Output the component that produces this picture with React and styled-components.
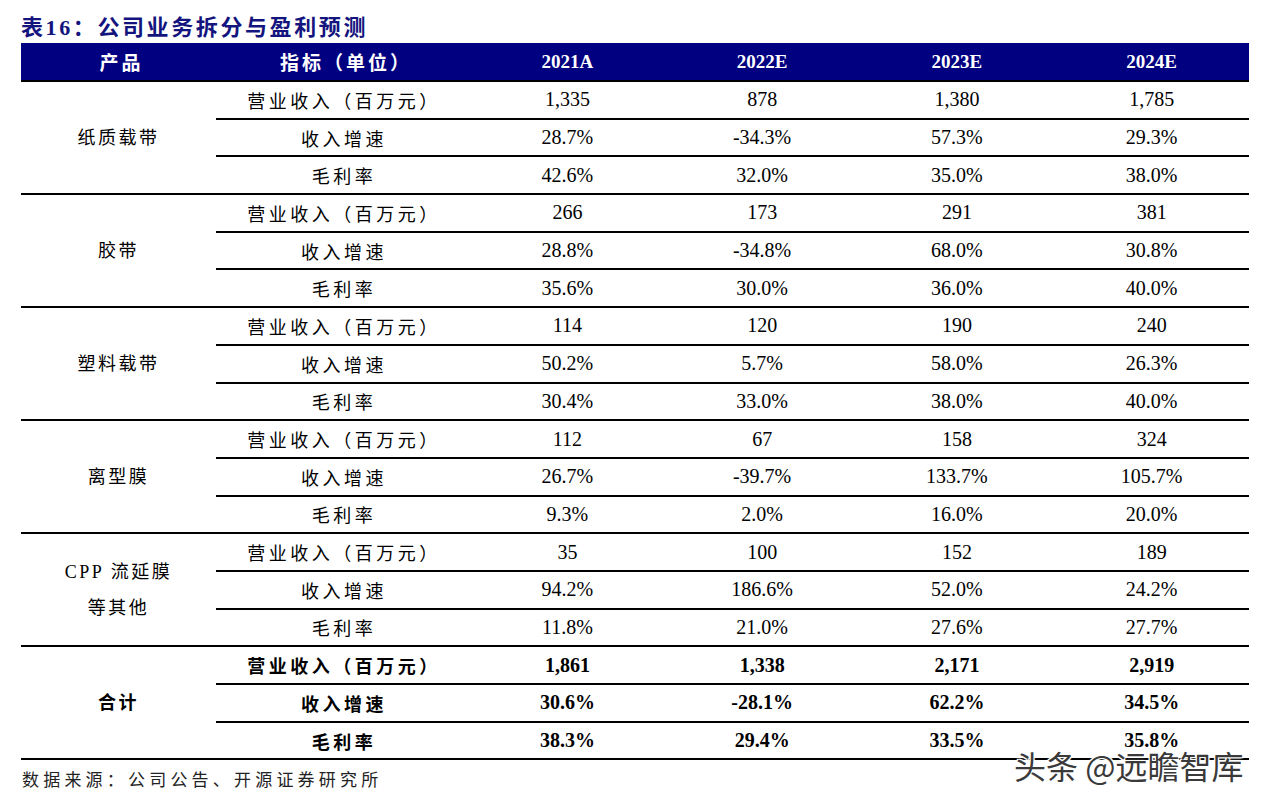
import React from 'react'
import styled, { createGlobalStyle } from 'styled-components'

const GlobalStyle = createGlobalStyle`
  html, body { margin: 0; padding: 0; background: #fff; }
  body { font-family: "Liberation Serif", "Noto Sans CJK SC", serif; color: #000; }
`

const groups = [
  {
    name: ['纸质载带'],
    rows: [
      ['营业收入（百万元）', '1,335', '878', '1,380', '1,785'],
      ['收入增速', '28.7%', '-34.3%', '57.3%', '29.3%'],
      ['毛利率', '42.6%', '32.0%', '35.0%', '38.0%'],
    ],
  },
  {
    name: ['胶带'],
    rows: [
      ['营业收入（百万元）', '266', '173', '291', '381'],
      ['收入增速', '28.8%', '-34.8%', '68.0%', '30.8%'],
      ['毛利率', '35.6%', '30.0%', '36.0%', '40.0%'],
    ],
  },
  {
    name: ['塑料载带'],
    rows: [
      ['营业收入（百万元）', '114', '120', '190', '240'],
      ['收入增速', '50.2%', '5.7%', '58.0%', '26.3%'],
      ['毛利率', '30.4%', '33.0%', '38.0%', '40.0%'],
    ],
  },
  {
    name: ['离型膜'],
    rows: [
      ['营业收入（百万元）', '112', '67', '158', '324'],
      ['收入增速', '26.7%', '-39.7%', '133.7%', '105.7%'],
      ['毛利率', '9.3%', '2.0%', '16.0%', '20.0%'],
    ],
  },
  {
    name: ['CPP 流延膜', '等其他'],
    rows: [
      ['营业收入（百万元）', '35', '100', '152', '189'],
      ['收入增速', '94.2%', '186.6%', '52.0%', '24.2%'],
      ['毛利率', '11.8%', '21.0%', '27.6%', '27.7%'],
    ],
  },
  {
    name: ['合计'],
    bold: true,
    rows: [
      ['营业收入（百万元）', '1,861', '1,338', '2,171', '2,919'],
      ['收入增速', '30.6%', '-28.1%', '62.2%', '34.5%'],
      ['毛利率', '38.3%', '29.4%', '33.5%', '35.8%'],
    ],
  },
]

const Page = styled.div`
  position: relative;
  width: 1273px;
  height: 797px;
  overflow: hidden;
`

const Title = styled.div`
  padding: 9px 0 0 21px;
  height: 34px;
  font-size: 22px;
  font-weight: bold;
  color: #14147e;
  letter-spacing: 2.6px;
  font-family: "Liberation Serif", "Noto Sans CJK SC", serif;
`

const Table = styled.div`
  width: 1228px;
  margin-left: 21px;
`

const HeaderRow = styled.div`
  display: grid;
  grid-template-columns: 195px 254px repeat(4, 1fr);
  height: 37px;
  background: #000080;
  border-bottom: 2px solid #000;
  color: #fff;
  font-weight: bold;
  font-size: 19px;
`

const HeadCell = styled.div`
  display: flex;
  align-items: center;
  justify-content: center;
  letter-spacing: ${p => (p.$cjk ? '3px' : '0')};
  padding-left: ${p => (p.$cjk ? '6px' : '0')};
`

const Group = styled.div`
  display: grid;
  grid-template-columns: 195px 1fr;
  border-bottom: 2px solid #000;
  font-weight: ${p => (p.$bold ? 'bold' : 'normal')};
`

const Product = styled.div`
  display: flex;
  flex-direction: column;
  align-items: center;
  justify-content: center;
  font-size: 18px;
  line-height: 36px;
  letter-spacing: 2.5px;
`

const Rows = styled.div`
  display: flex;
  flex-direction: column;
`

const Row = styled.div`
  display: grid;
  grid-template-columns: 254px repeat(4, 1fr);
  height: 35.7px;
  &:not(:last-child) {
    border-bottom: 2px solid #000;
  }
`

const Label = styled.div`
  display: flex;
  align-items: center;
  justify-content: center;
  padding-left: 2px;
  font-size: 18px;
  letter-spacing: 3.5px;
`

const Value = styled.div`
  display: flex;
  align-items: center;
  justify-content: center;
  font-size: 20px;
`

const Source = styled.div`
  padding: 6px 0 0 22px;
  font-size: 17px;
  letter-spacing: 4.2px;
  color: #222;
`

const Watermark = styled.div`
  position: absolute;
  left: 1014px;
  top: 742px;
  font-family: "Noto Sans CJK SC", sans-serif;
  font-size: 32px;
  color: #3a3a3a;
  letter-spacing: 0;
  text-shadow: -1px -1px 0 #fff, 1px -1px 0 #fff, -1px 1px 0 #fff, 1px 1px 0 #fff,
    0 0 3px #fff;
`

export default function App() {
  return (
    <Page>
      <GlobalStyle />
      <Title>表16：公司业务拆分与盈利预测</Title>
      <Table>
        <HeaderRow>
          <HeadCell $cjk>产品</HeadCell>
          <HeadCell $cjk>指标（单位）</HeadCell>
          <HeadCell>2021A</HeadCell>
          <HeadCell>2022E</HeadCell>
          <HeadCell>2023E</HeadCell>
          <HeadCell>2024E</HeadCell>
        </HeaderRow>
        {groups.map((g, i) => (
          <Group key={i} $bold={g.bold}>
            <Product>
              {g.name.map(n => (
                <span key={n}>{n}</span>
              ))}
            </Product>
            <Rows>
              {g.rows.map((r, j) => (
                <Row key={j}>
                  <Label>{r[0]}</Label>
                  {r.slice(1).map((v, k) => (
                    <Value key={k}>{v}</Value>
                  ))}
                </Row>
              ))}
            </Rows>
          </Group>
        ))}
      </Table>
      <Source>数据来源：公司公告、开源证券研究所</Source>
      <Watermark>头条 @远瞻智库</Watermark>
    </Page>
  )
}
